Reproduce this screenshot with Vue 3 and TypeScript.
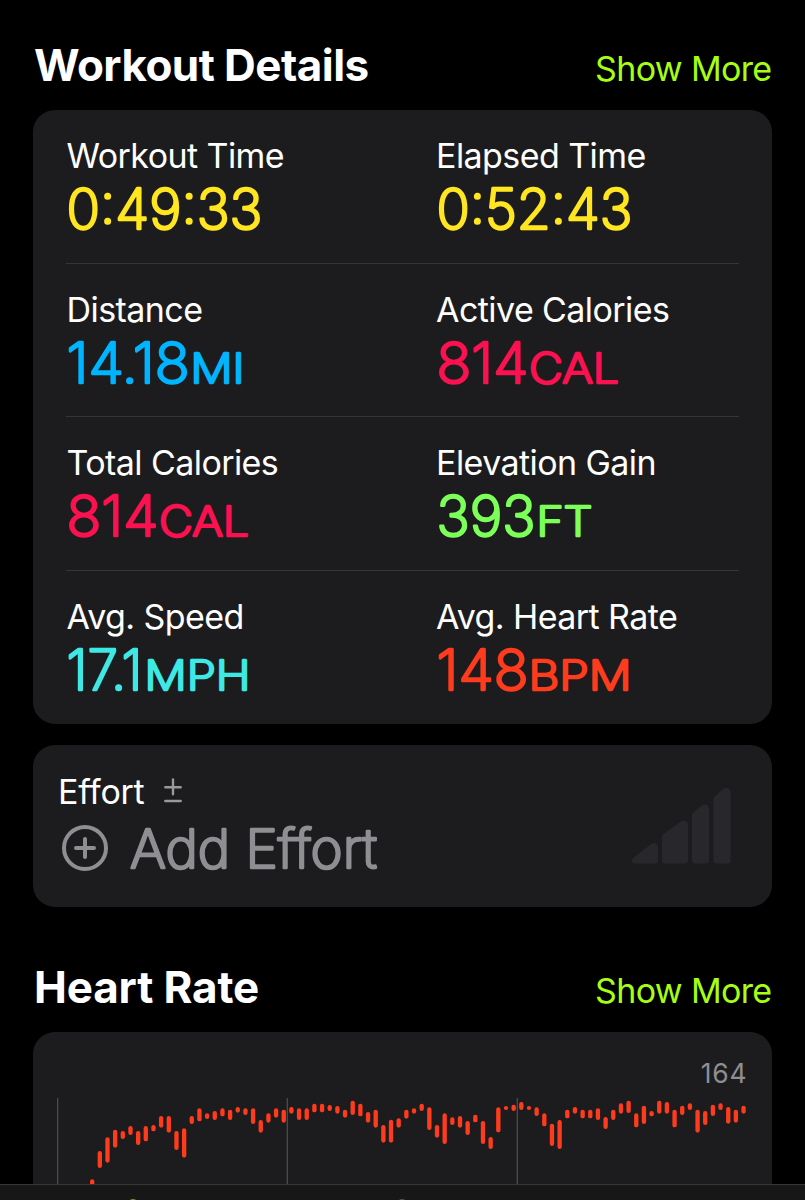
<script setup lang="ts">
interface Metric {
  label: string
  value: string
  width: number
  unit?: string
  unitX?: number
  unitWidth?: number
  tone: string
}

const rows: Metric[][] = [
  [
    { label: 'Workout Time', value: '0:49:33', width: 196, tone: 'time' },
    { label: 'Elapsed Time', value: '0:52:43', width: 196, tone: 'time' },
  ],
  [
    { label: 'Distance', value: '14.18', width: 123, unit: 'MI', unitX: 124.5, unitWidth: 54, tone: 'distance' },
    { label: 'Active Calories', value: '814', width: 92, unit: 'CAL', unitX: 93, unitWidth: 90, tone: 'energy' },
  ],
  [
    { label: 'Total Calories', value: '814', width: 92, unit: 'CAL', unitX: 93, unitWidth: 90, tone: 'energy' },
    { label: 'Elevation Gain', value: '393', width: 99, unit: 'FT', unitX: 100.5, unitWidth: 56, tone: 'elevation' },
  ],
  [
    { label: 'Avg. Speed', value: '17.1', width: 76, unit: 'MPH', unitX: 78.5, unitWidth: 106, tone: 'speed' },
    { label: 'Avg. Heart Rate', value: '148', width: 92, unit: 'BPM', unitX: 92.5, unitWidth: 103, tone: 'heart' },
  ],
]

// [top, bottom] of each sample, in chart units (three per pixel)
const samples: number[][] = [
  [244, 270], [159, 210], [118, 194], [95, 149], [99, 123], [84, 111], [99, 141], [84, 130], [81, 100], [54, 89],
  [54, 104], [99, 156], [91, 179], [54, 78], [31, 70], [46, 63], [39, 66], [31, 55], [35, 66], [27, 44],
  [31, 51], [31, 78], [66, 104], [46, 74], [31, 59], [35, 74], [27, 47], [31, 66], [31, 66], [17, 43],
  [17, 43], [21, 39], [24, 47], [35, 59], [8, 51], [17, 55], [42, 74], [35, 89], [81, 134], [65, 134],
  [61, 89], [35, 62], [31, 47], [17, 39], [28, 96], [81, 119], [46, 138], [58, 81], [54, 89], [69, 111],
  [50, 73], [69, 138], [117, 153], [28, 103], [24, 36], [20, 39], [12, 36], [24, 36], [28, 54], [46, 85],
  [77, 144], [66, 153], [35, 61], [27, 47], [35, 61], [35, 61], [31, 66], [57, 93], [35, 66], [16, 47],
  [8, 45], [46, 88], [23, 78], [39, 55], [8, 47], [12, 47], [35, 88], [23, 51], [16, 36], [35, 104],
  [39, 81], [20, 54], [16, 36], [27, 77], [35, 74], [23, 47],
]
</script>

<template>
  <main class="screen">
    <header class="section-head">
      <h2 class="t-workout">Workout Details</h2>
      <a class="more">Show More</a>
    </header>

    <section class="card details">
      <div v-for="(row, r) in rows" :key="r" class="row">
        <div v-for="m in row" :key="m.label" class="cell">
          <div class="label">{{ m.label }}</div>
          <svg class="value" :class="m.tone" width="300" height="60" viewBox="0 0 300 60">
            <text x="0.5" y="49" class="num" :textLength="m.width" lengthAdjust="spacingAndGlyphs">{{ m.value }}</text>
            <text v-if="m.unit" :x="m.unitX" y="49" class="unit" :textLength="m.unitWidth" lengthAdjust="spacingAndGlyphs">{{ m.unit }}</text>
          </svg>
        </div>
      </div>
    </section>

    <section class="card effort">
      <div class="effort-main">
        <div class="effort-label">
          <span class="label">Effort</span>
          <svg width="18" height="26" viewBox="0 0 18 26" class="plusminus">
            <path d="M1.3 9.2H16.7M9 1.5V16.3M1.3 23H16.7" />
          </svg>
        </div>
        <div class="add">
          <svg width="46" height="46" viewBox="0 0 46 46" class="plus">
            <circle cx="23" cy="23" r="21" />
            <path d="M23 14V32M14 23H32" />
          </svg>
          <svg class="add-text" width="270" height="70" viewBox="0 0 270 70">
            <text x="0" y="55" class="num" textLength="247" lengthAdjust="spacingAndGlyphs">Add Effort</text>
          </svg>
        </div>
      </div>
      <svg class="bars" width="102" height="78" viewBox="0 0 102 78">
        <path d="M4 73.5L21.5 59.500Q24 58 24 60.500V73.5Z" />
        <path d="M34 50V73.5H54V38.500Q54 35.500 51.500 37Z" />
        <path d="M64 28V73.500H75V22.500Q75 19.500 72.500 21Z" />
        <path d="M85.500 12V73.500H96.500V5.500Q96.500 3 94.500 4Z" />
      </svg>
    </section>

    <header class="section-head second">
      <h2 class="t-heart">Heart Rate</h2>
      <a class="more">Show More</a>
    </header>

    <section class="card heart-card">
      <div class="peak">164</div>
      <svg class="chart" width="739" height="90" viewBox="0 0 2217 270">
        <path class="grid" d="M74 0V270M763 0V270M1453 0V270" />
        <rect v-for="(s, i) in samples" :key="i" class="sample" :x="171 + i * 22.99" :y="s[0]" width="13" :height="s[1] - s[0]" rx="6.5" />
      </svg>
    </section>

    <nav class="tabbar">
      <i class="peek-a"></i>
      <i class="peek-b"></i>
    </nav>
  </main>
</template>

<style>
body {
  background: #000;
  overflow: hidden;
}
</style>

<style scoped>
.screen {
  position: relative;
  box-sizing: border-box;
  width: 805px;
  height: 1200px;
  padding: 0 33px;
  overflow: hidden;
  background: #000;
  color: #fff;
  font-family: Inter, "Liberation Sans", sans-serif;
}
.section-head {
  display: flex;
  align-items: baseline;
  justify-content: space-between;
  box-sizing: border-box;
  height: 110px;
  padding: 38px 0.5px 0 1px;
  line-height: 54px;
}
.section-head.second {
  height: 125px;
  padding-top: 53px;
}
h2 {
  margin: 0;
  font-size: 44px;
  font-weight: 700;
}
.t-workout {
  letter-spacing: -0.55px;
}
.t-heart {
  letter-spacing: -0.15px;
}
.more {
  color: #a6ff12;
  font-size: 34px;
  font-weight: 400;
  letter-spacing: -0.65px;
}
.card {
  box-sizing: border-box;
  border-radius: 22px;
  background: #1c1c1e;
}
.details {
  height: 614px;
  padding: 0 33px;
}
.row {
  display: grid;
  grid-template-columns: 369.5px 1fr;
  box-sizing: border-box;
  height: 153.5px;
  padding-top: 25px;
  border-bottom: 1px solid #353537;
}
.row:last-child {
  border-bottom: 0;
}
.label {
  height: 40px;
  font-size: 34px;
  line-height: 41px;
  font-weight: 400;
  letter-spacing: -0.58px;
  white-space: nowrap;
}
.cell .label {
  padding-left: 0.6px;
}
.effort .label {
  letter-spacing: -0.3px;
}
.value {
  display: block;
  margin-top: 5px;
  overflow: visible;
  fill: currentColor;
  stroke: currentColor;
}
.num {
  font-size: 55.5px;
  font-weight: 200;
  stroke-width: 2.7px;
  stroke-linejoin: round;
}
.unit {
  font-size: 41.5px;
  font-weight: 200;
  stroke-width: 2.7px;
  stroke-linejoin: round;
}
.time { color: #ffe620; }
.distance { color: #00b4ff; }
.energy { color: #fa114f; }
.elevation { color: #7dff5a; }
.speed { color: #3ee8e4; }
.heart { color: #ff3b1d; }
.effort {
  display: flex;
  justify-content: space-between;
  height: 162.5px;
  margin-top: 20.5px;
  padding: 26px 39px 0 25px;
}
.effort-label {
  display: flex;
  align-items: center;
  gap: 20px;
}
.plusminus {
  fill: none;
  stroke: #98989d;
  stroke-width: 2.4;
  stroke-linecap: round;
}
.add {
  display: flex;
  align-items: center;
  gap: 22px;
  margin: 2.5px 0 0 3.500px;
}
.plus {
  fill: none;
  stroke: #8e8e93;
  stroke-width: 4;
  stroke-linecap: round;
}
.add-text {
  overflow: visible;
  fill: #8e8e93;
  stroke: #8e8e93;
  font-variant-ligatures: none;
  font-feature-settings: "calt" 0, "liga" 0;
}
.add-text .num {
  font-size: 54px;
}
.bars {
  margin-top: 16px;
  fill: #28282c;
  stroke: #28282c;
  stroke-width: 6;
  stroke-linejoin: round;
}
.heart-card {
  height: 190px;
}
.peak {
  height: 66px;
  padding: 25px 24.5px 0 0;
  box-sizing: border-box;
  color: #8e8e93;
  font-size: 26.5px;
  line-height: 32px;
  letter-spacing: 0.8px;
  text-align: right;
}
.chart {
  display: block;
}
.grid {
  fill: none;
  stroke: #4a4a4c;
  stroke-width: 4;
}
.sample {
  fill: #ff3b1d;
}
.tabbar {
  position: absolute;
  left: 0;
  right: 0;
  bottom: 0;
  height: 16px;
  box-sizing: border-box;
  border-top: 1px solid #363636;
  background: #171717;
  overflow: hidden;
}
.peek-a,
.peek-b {
  position: absolute;
  top: 13.500px;
  left: 129px;
  width: 8px;
  height: 8px;
  border-radius: 50%;
  background: #7f9420;
}
.peek-b {
  left: 398px;
  background: #555;
}
</style>
